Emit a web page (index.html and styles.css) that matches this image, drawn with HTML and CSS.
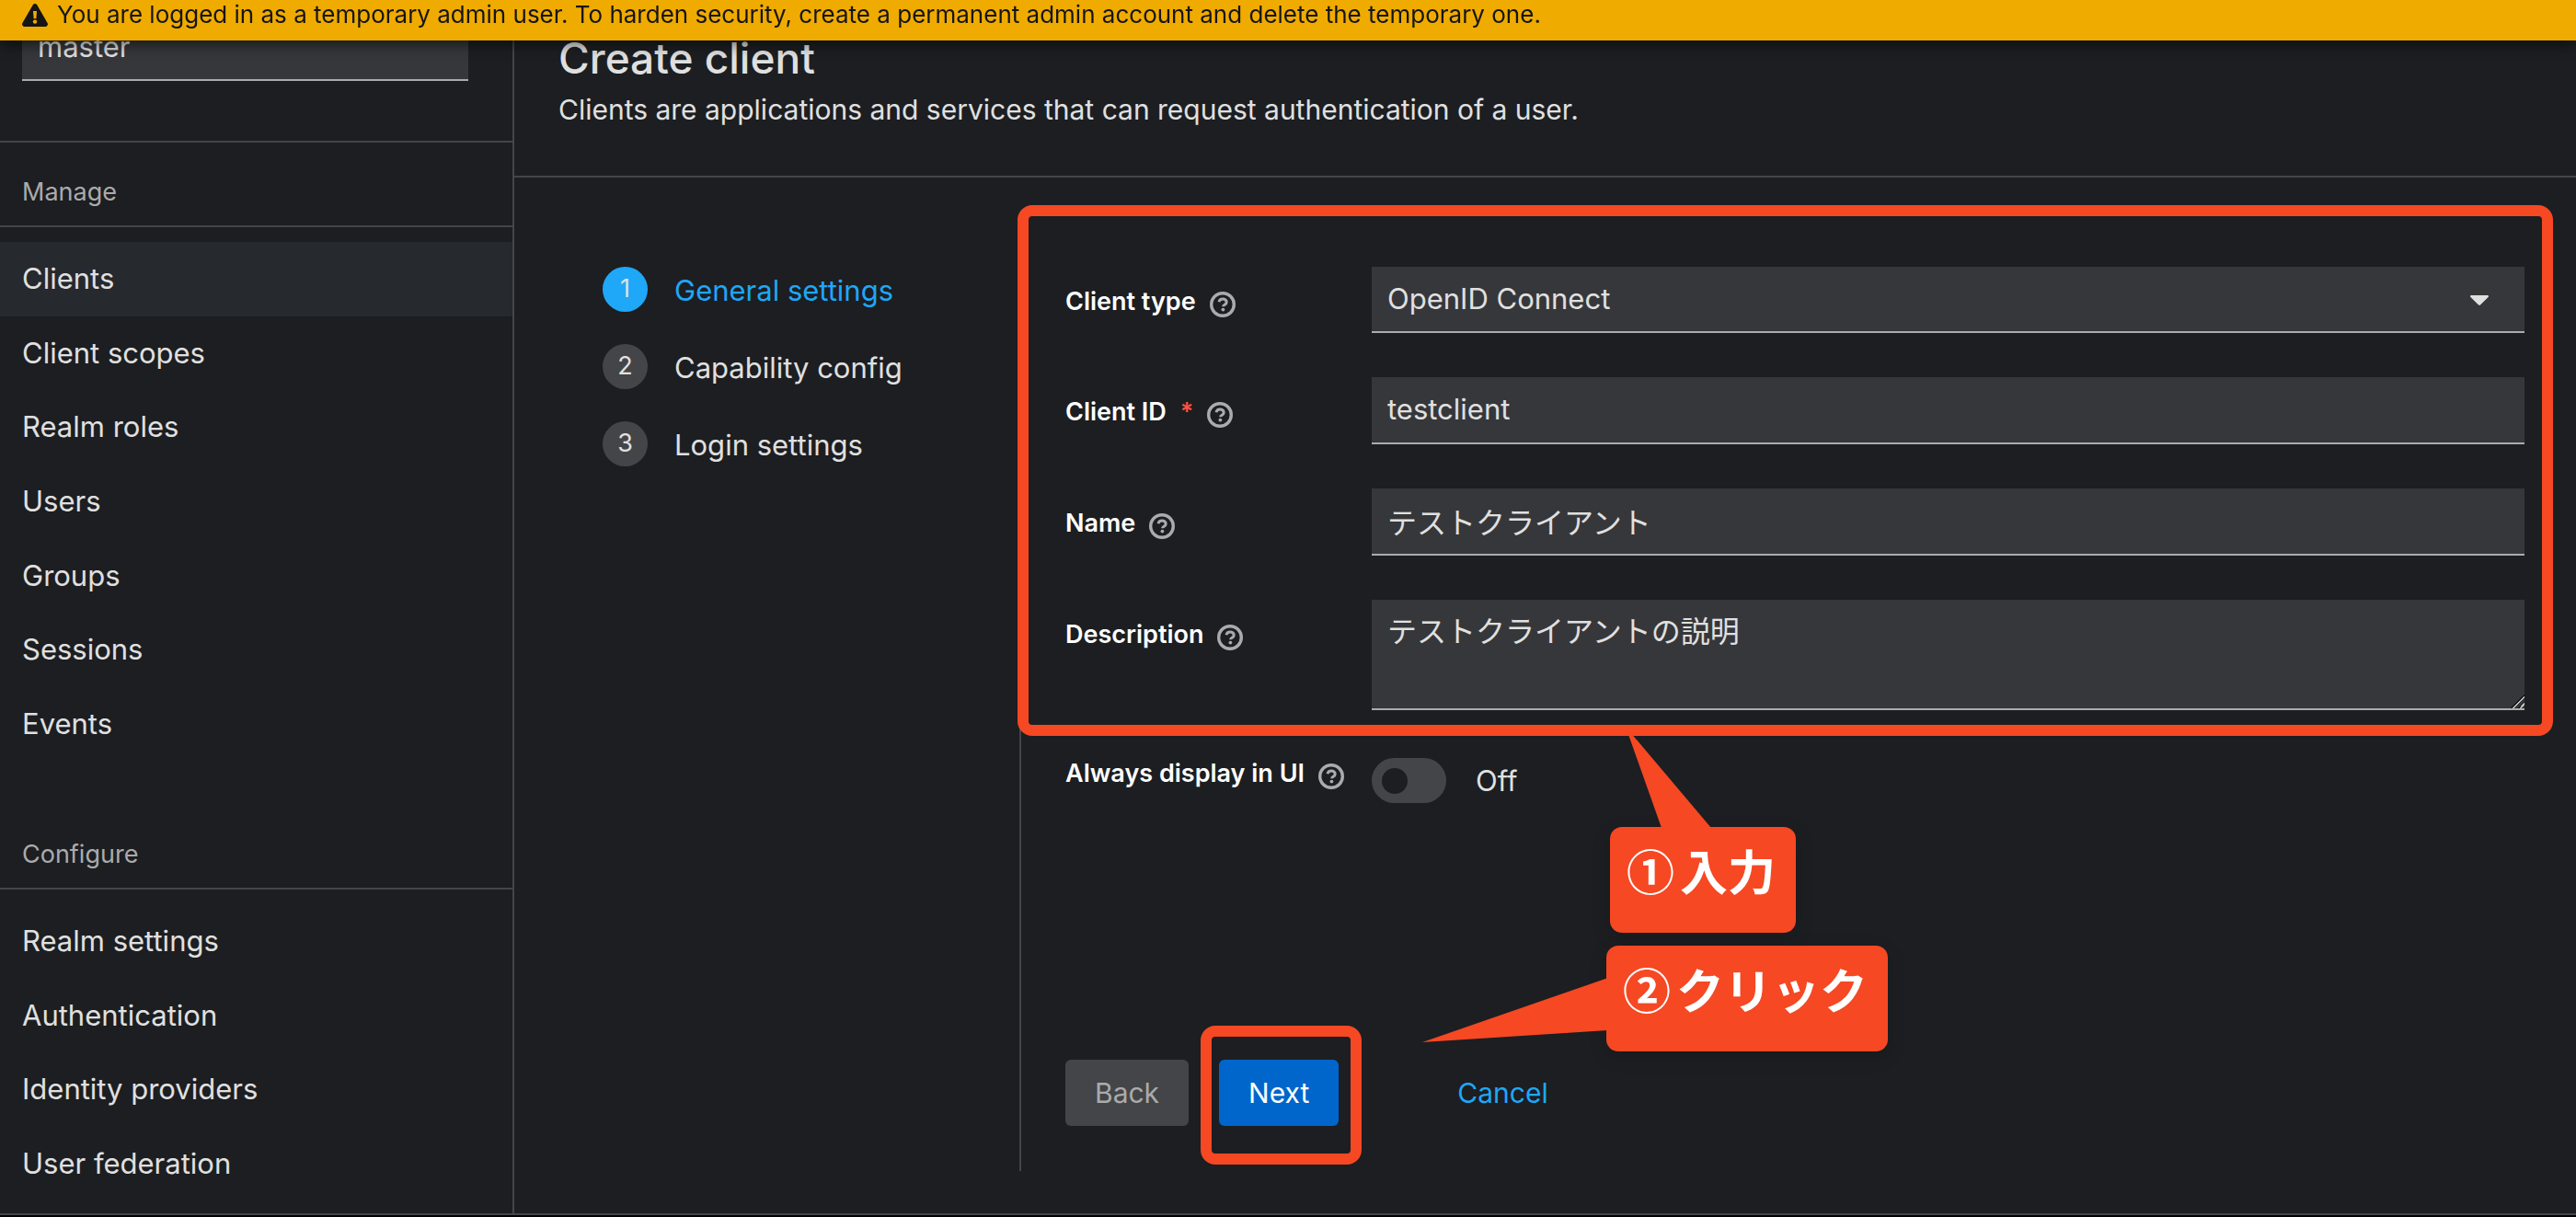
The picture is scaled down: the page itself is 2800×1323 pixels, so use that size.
FILE: index.html
```html
<!DOCTYPE html>
<html lang="en">
<head>
  <meta charset="utf-8">
  <title>Create client</title>
  <meta name="viewport" content="width=device-width, initial-scale=1">
  <link rel="stylesheet" href="styles.css">
</head>
<body>
  <svg class="sprite" aria-hidden="true">
    <symbol id="help" viewBox="0 0 28 28">
      <circle cx="14" cy="14" r="12.3" fill="none" stroke="currentColor" stroke-width="3.400"/>
      <path d="M10 11.200c.5-2.300 2-3.200 4.100-3.200 2.300 0 4.100 1.300 4.100 3.400 0 2.900-3.600 2.700-3.600 4.800" fill="none" stroke="currentColor" stroke-width="3"/>
      <circle cx="14.400" cy="19.600" r="1.900" fill="currentColor"/>
    </symbol>
  </svg>

  <div class="banner" role="status">
    <svg class="banner-icon" viewBox="0 0 28 25" aria-hidden="true">
      <path d="M14 0c.9 0 1.700.4 2.200 1.200l11.400 19.800c1 1.700-.2 4-2.200 4H2.600c-2 0-3.200-2.300-2.200-4L11.800 1.200C12.300.4 13.100 0 14 0z" fill="#151515"/>
      <path d="M12 8h4l-.6 8.200h-2.800z" fill="#f0ab00"/>
      <circle cx="14" cy="19.600" r="2.200" fill="#f0ab00"/>
    </svg>
    <span>You are logged in as a temporary admin user. To harden security, create a permanent admin account and delete the temporary one.</span>
  </div>

  <div class="app">
    <nav class="sidebar" aria-label="Main">
      <div class="realm">
        <select class="control" aria-label="Realm"><option>master</option></select>
      </div>
      <section class="nav-section">
        <h2 class="nav-title">Manage</h2>
        <ul class="nav-list nav-list-manage">
          <li><a class="nav-link active" href="#clients">Clients</a></li>
          <li><a class="nav-link" href="#scopes">Client scopes</a></li>
          <li><a class="nav-link" href="#roles">Realm roles</a></li>
          <li><a class="nav-link" href="#users">Users</a></li>
          <li><a class="nav-link" href="#groups">Groups</a></li>
          <li><a class="nav-link" href="#sessions">Sessions</a></li>
          <li><a class="nav-link" href="#events">Events</a></li>
        </ul>
      </section>
      <section class="nav-section">
        <h2 class="nav-title">Configure</h2>
        <ul class="nav-list nav-list-configure">
          <li><a class="nav-link" href="#realm">Realm settings</a></li>
          <li><a class="nav-link" href="#authentication">Authentication</a></li>
          <li><a class="nav-link" href="#providers">Identity providers</a></li>
          <li><a class="nav-link" href="#federation">User federation</a></li>
        </ul>
      </section>
    </nav>

    <main class="main">
      <header class="page-header">
        <h1>Create client</h1>
        <p>Clients are applications and services that can request authentication of a user.</p>
      </header>

      <div class="wizard">
        <ol class="steps">
          <li><a class="step current" href="#general"><span class="step-number">1</span><span class="step-name">General settings</span></a></li>
          <li><a class="step" href="#capability"><span class="step-number">2</span><span class="step-name">Capability config</span></a></li>
          <li><a class="step" href="#login"><span class="step-number">3</span><span class="step-name">Login settings</span></a></li>
        </ol>

        <form class="wizard-body">
          <div class="fields">
            <div class="row">
              <div class="label-cell">
                <label for="type">Client type</label>
                <button class="help" type="button" aria-label="Help for client type"><svg><use href="#help"/></svg></button>
              </div>
              <div class="select-wrap">
                <select class="control" id="type"><option>OpenID Connect</option></select>
                <svg class="caret" viewBox="0 0 20 11" aria-hidden="true"><path d="M1.200 0h17.600c1 0 1.500 1.200.8 1.900l-8.400 8.400c-.7.700-1.700.7-2.400 0L.4 1.900C-.3 1.200.2 0 1.200 0z" fill="#e0e0e0"/></svg>
              </div>
            </div>
            <div class="row">
              <div class="label-cell">
                <label for="client-id">Client ID <span class="required">*</span></label>
                <button class="help" type="button" aria-label="Help for client ID"><svg><use href="#help"/></svg></button>
              </div>
              <input class="control" id="client-id" type="text" value="testclient">
            </div>
            <div class="row">
              <div class="label-cell">
                <label for="name">Name</label>
                <button class="help" type="button" aria-label="Help for name"><svg><use href="#help"/></svg></button>
              </div>
              <input class="control" id="name" type="text" lang="ja" value="テストクライアント">
            </div>
            <div class="row">
              <div class="label-cell">
                <label for="description">Description</label>
                <button class="help" type="button" aria-label="Help for description"><svg><use href="#help"/></svg></button>
              </div>
              <textarea class="control" id="description" lang="ja">テストクライアントの説明</textarea>
            </div>
            <div class="frame frame-fields"></div>
            <div class="callout callout-input" lang="ja">
              <svg class="tail" viewBox="0 0 110 110" aria-hidden="true"><path d="M17 0L110 110H56z"/></svg>
              <span>①</span><span>入力</span>
            </div>
          </div>

          <div class="row row-switch">
            <div class="label-cell">
              <label for="always">Always display in UI</label>
              <button class="help" type="button" aria-label="Help for always display in UI"><svg><use href="#help"/></svg></button>
            </div>
            <div class="switch-cell">
              <input class="switch" id="always" type="checkbox" role="switch">
              <span>Off</span>
            </div>
          </div>

          <div class="actions">
            <button class="button" type="button" disabled>Back</button>
            <div class="next-wrap">
              <button class="button primary" type="button">Next</button>
              <div class="frame frame-next"></div>
              <div class="callout callout-click" lang="ja">
                <svg class="tail" viewBox="0 0 202 72" aria-hidden="true"><path d="M0 70L202 0V57z"/></svg>
                <span>②</span><span>クリック</span>
              </div>
            </div>
            <a class="cancel" href="#clients">Cancel</a>
          </div>
        </form>
      </div>
    </main>
  </div>
</body>
</html>
```
FILE: styles.css
```css
:root {
  --bg: #1c1e21;
  --field: #36373a;
  --line: #444548;
  --text: #e0e0e0;
  --muted: #aaabac;
  --blue: #1fa7f8;
  --mark: #f54823;
}

* {
  box-sizing: border-box;
}

body {
  display: flex;
  flex-direction: column;
  min-height: 100vh;
  margin: 0;
  padding-bottom: 2px;
  background: #000;
  color: var(--text);
  font: 31px/48px Inter, "Noto Sans CJK JP", sans-serif;
}

h1, h2, p, ul, ol {
  margin: 0;
  padding: 0;
  font-weight: 400;
  list-style: none;
}

a {
  color: inherit;
  text-decoration: none;
}

.sprite {
  position: absolute;
  width: 0;
  height: 0;
}

.banner {
  position: fixed;
  inset: 0 0 auto;
  z-index: 2;
  display: flex;
  align-items: center;
  gap: 10px;
  height: 44px;
  padding: 0 24px 12px;
  background: #f0ab00;
  box-shadow: 0 4px 16px rgba(0, 0, 0, 0.6);
  color: #151515;
  font-size: 26px;
  line-height: 32px;
}

.banner-icon {
  width: 28px;
  height: 25px;
}

.app {
  display: flex;
  flex: 1;
  border-bottom: 2px solid var(--line);
  background: var(--bg);
}

.sidebar {
  flex: 0 0 559px;
  border-right: 2px solid var(--line);
}

.realm {
  padding: 16px 48px 65px 24px;
  border-bottom: 2px solid var(--line);
}

.nav-section + .nav-section {
  margin-top: 48px;
}

.nav-title {
  padding: 33px 24px 15px;
  border-bottom: 2px solid var(--line);
  color: var(--muted);
  font-size: 27px;
  line-height: 42px;
}

.nav-list {
  display: grid;
  margin-top: 16px;
}

.nav-list-manage {
  min-height: 564px;
}

.nav-list-configure {
  min-height: 322px;
}

.nav-link {
  display: flex;
  align-items: center;
  height: 100%;
  padding: 0 24px;
}

.nav-link.active {
  background: #26292d;
}

.main {
  display: flex;
  flex: 1;
  flex-direction: column;
  min-width: 0;
}

.page-header {
  padding: 31px 48px 48px;
  border-bottom: 2px solid var(--line);
  font-size: 30px;
}

h1 {
  font-size: 46px;
  font-weight: 500;
  line-height: 64px;
}

.wizard {
  display: flex;
  flex: 1;
  padding: 48px 0 46px;
}

.steps {
  display: flex;
  flex: 0 0 549px;
  flex-direction: column;
  gap: 36px;
  padding: 49px 48px 0 96px;
}

.step {
  display: flex;
  gap: 29px;
  height: 48px;
}

.step-number {
  width: 49px;
  height: 49px;
  border-radius: 50%;
  background: var(--line);
  font-size: 27px;
  text-align: center;
}

.step-name {
  padding-top: 2px;
}

.current {
  color: var(--blue);
}

.current .step-number {
  background: var(--blue);
  color: var(--text);
}

.wizard-body {
  display: flex;
  flex: 1;
  flex-direction: column;
  min-width: 0;
  padding: 49px 56px 49px 48px;
  border-left: 2px solid var(--line);
}

.fields {
  position: relative;
  display: grid;
  gap: 48px;
}

.row {
  display: grid;
  grid-template-columns: 333px minmax(0, 1fr);
}

.label-cell {
  display: flex;
  align-items: flex-start;
  gap: 15px;
  padding-top: 17px;
  color: #fff;
  font-size: 27px;
  font-weight: 600;
  line-height: 42px;
}

.required {
  margin-left: 8px;
  color: #fe5142;
}

.help {
  width: 28px;
  height: 28px;
  margin-top: 10px;
  padding: 0;
  border: 0;
  background: none;
  color: var(--muted);
}

.help svg {
  display: block;
  width: 28px;
  height: 28px;
}

.control {
  display: block;
  width: 100%;
  height: 72px;
  margin: 0;
  padding: 0 17px;
  border: 0;
  border-bottom: 2px solid var(--muted);
  border-radius: 0;
  outline: 0;
  appearance: none;
  background: var(--field);
  color: var(--text);
  font: inherit;
}

input.control {
  height: 73px;
  padding-bottom: 2px;
}

textarea.control {
  height: 120px;
  padding: 11px 17px;
  resize: vertical;
}

.control:lang(ja) {
  font-size: 32px;
}

textarea::-webkit-resizer {
  background: linear-gradient(135deg, transparent 48%, #151515 48% 55%, #c0c0c0 55% 63%, transparent 63% 74%, #151515 74% 80%, #c0c0c0 80% 88%, transparent 88%);
}

.select-wrap {
  position: relative;
}

.caret {
  position: absolute;
  top: 31px;
  right: 39px;
  width: 20px;
  height: 11px;
  pointer-events: none;
}

.row-switch {
  margin-top: 48px;
}

.row-switch .label-cell {
  padding-top: 0;
}

.switch-cell {
  display: flex;
  align-items: center;
  gap: 32px;
  padding-top: 4px;
}

.switch {
  display: flex;
  align-items: center;
  width: 81px;
  height: 49px;
  margin: 0;
  padding: 0 11px;
  border-radius: 25px;
  appearance: none;
  background: var(--line);
}

.switch::before {
  width: 28px;
  height: 28px;
  border-radius: 50%;
  background: var(--bg);
  content: "";
}

.switch:checked {
  justify-content: flex-end;
  background: var(--blue);
}

.actions {
  display: flex;
  align-items: center;
  margin-top: auto;
  font-size: 30px;
}

.button {
  display: block;
  height: 72px;
  padding: 0 32px;
  border: 0;
  border-radius: 6px;
  background: var(--line);
  color: var(--muted);
  font: inherit;
}

.primary {
  background: #06c;
  color: #fff;
}

.next-wrap {
  position: relative;
  margin-left: 33px;
}

.cancel {
  margin-left: 129px;
  color: var(--blue);
}

.frame {
  position: absolute;
  border: 12px solid var(--mark);
  border-radius: 16px;
  pointer-events: none;
}

.frame-fields {
  inset: -67px -31px -28px -52px;
}

.frame-next {
  inset: -37px -25px -42px -20px;
}

.callout {
  position: absolute;
  display: flex;
  gap: 6px;
  height: 115px;
  padding: 10px 18px;
  border-radius: 13px;
  background: var(--mark);
  box-shadow: 0 6px 20px rgba(0, 0, 0, 0.15);
  color: #fff;
  font-family: "Noto Sans CJK JP", sans-serif;
  font-size: 52px;
  font-weight: 700;
  line-height: 73px;
  white-space: nowrap;
}

.callout-input {
  top: 609px;
  left: 592px;
  width: 202px;
}

.callout-click {
  top: -124px;
  left: 421px;
  width: 306px;
}

.tail {
  position: absolute;
  fill: var(--mark);
}

.callout-input .tail {
  bottom: 114px;
  left: 0;
  width: 110px;
  height: 110px;
}

.callout-click .tail {
  top: 35px;
  right: 304px;
  width: 202px;
  height: 72px;
}
```
